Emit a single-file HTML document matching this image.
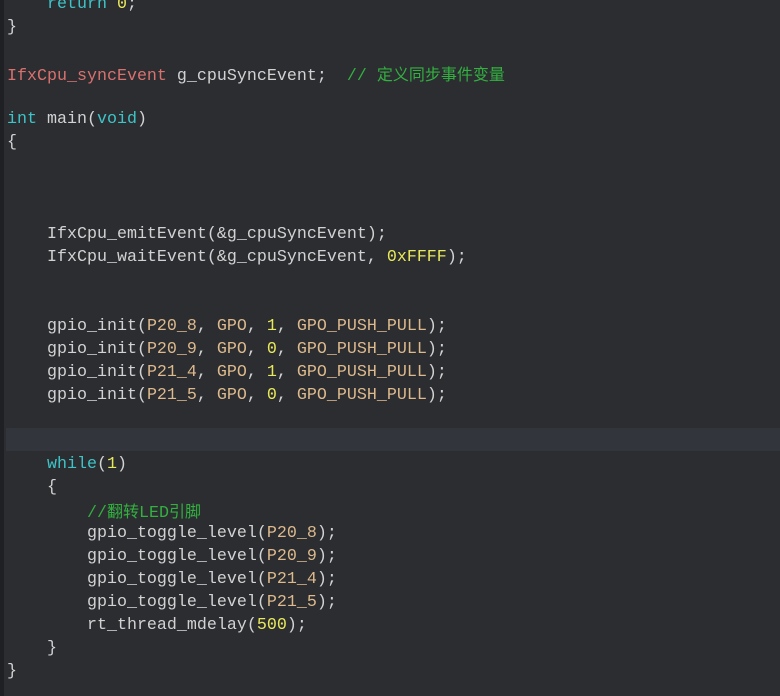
<html><head><style>
body{margin:0;width:780px;height:696px;background:#2b2d31;overflow:hidden;position:relative}
.g{position:absolute;left:0;top:0;width:4px;height:696px;background:#1f2023}
.hl{position:absolute;left:6px;top:428px;width:774px;height:23px;background:#32353b}
.code{position:absolute;left:7px;top:-7.5px;font:16.67px "Liberation Mono","Noto Sans CJK SC",monospace;color:#d2d2d2}
.code div{height:23px;line-height:23px;white-space:pre;overflow:visible}
.k{color:#3ec4c8}.n{color:#e8e85a}.p{color:#ddb98c}.t{color:#d9716f}.c{color:#33b040}
.cj{font-family:"Noto Sans CJK SC",sans-serif;font-size:16px}
</style></head><body><div class="g"></div><div class="hl"></div>
<div class="code">
<div>    <span class="k">return</span> <span class="n">0</span>;</div>
<div>}</div>
<div> </div>
<div><span class="t">IfxCpu_syncEvent</span> g_cpuSyncEvent;  <span class="c">// <span class="cj">定义同步事件变量</span></span></div>
<div> </div>
<div><span class="k">int</span> main(<span class="k">void</span>)</div>
<div>{</div>
<div> </div>
<div> </div>
<div> </div>
<div>    IfxCpu_emitEvent(&amp;g_cpuSyncEvent);</div>
<div>    IfxCpu_waitEvent(&amp;g_cpuSyncEvent, <span class="n">0xFFFF</span>);</div>
<div> </div>
<div> </div>
<div>    gpio_init(<span class="p">P20_8</span>, <span class="p">GPO</span>, <span class="n">1</span>, <span class="p">GPO_PUSH_PULL</span>);</div>
<div>    gpio_init(<span class="p">P20_9</span>, <span class="p">GPO</span>, <span class="n">0</span>, <span class="p">GPO_PUSH_PULL</span>);</div>
<div>    gpio_init(<span class="p">P21_4</span>, <span class="p">GPO</span>, <span class="n">1</span>, <span class="p">GPO_PUSH_PULL</span>);</div>
<div>    gpio_init(<span class="p">P21_5</span>, <span class="p">GPO</span>, <span class="n">0</span>, <span class="p">GPO_PUSH_PULL</span>);</div>
<div> </div>
<div> </div>
<div>    <span class="k">while</span>(<span class="n">1</span>)</div>
<div>    {</div>
<div>        <span class="c">//<span class="cj">翻转</span>LED<span class="cj">引脚</span></span></div>
<div>        gpio_toggle_level(<span class="p">P20_8</span>);</div>
<div>        gpio_toggle_level(<span class="p">P20_9</span>);</div>
<div>        gpio_toggle_level(<span class="p">P21_4</span>);</div>
<div>        gpio_toggle_level(<span class="p">P21_5</span>);</div>
<div>        rt_thread_mdelay(<span class="n">500</span>);</div>
<div>    }</div>
<div>}</div>
</div></body></html>
